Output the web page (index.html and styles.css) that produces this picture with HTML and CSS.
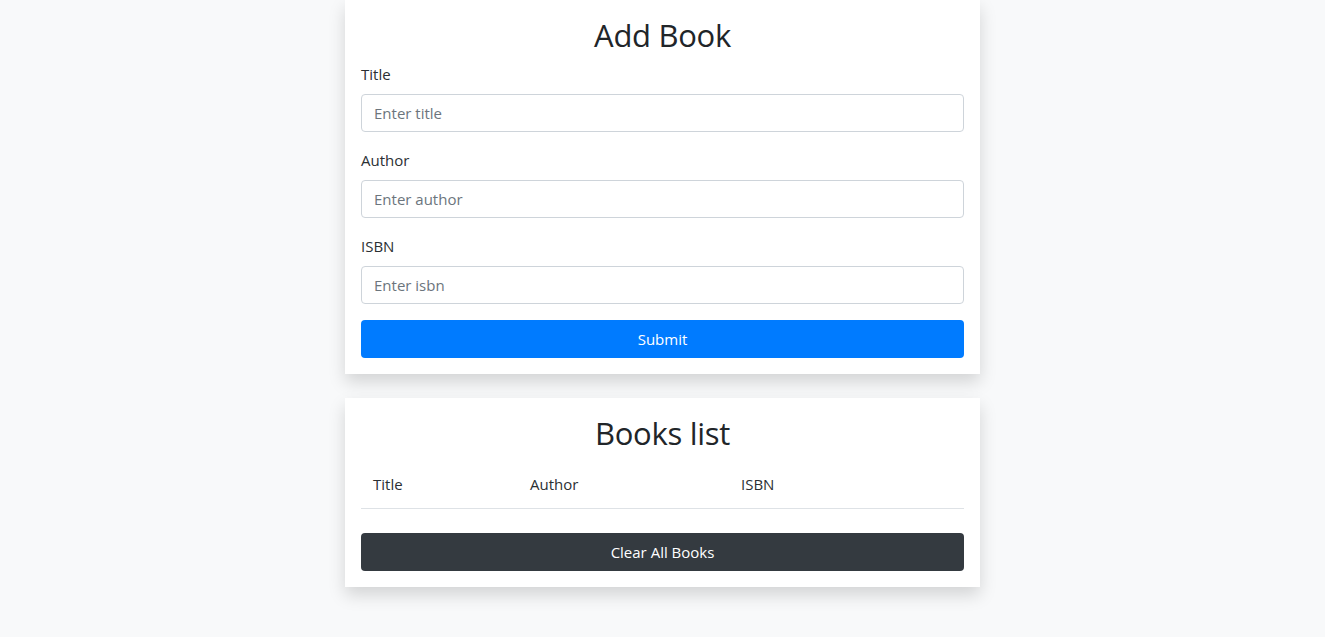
FILE: index.html
```html
<!DOCTYPE html>
<html lang="en">
<head>
<meta charset="utf-8">
<title>Book List</title>
<link rel="stylesheet" href="styles.css">
</head>
<body>
<main class="container">
  <section class="card">
    <h2 class="card-title">Add Book</h2>
    <form class="book-form">
      <div class="form-group">
        <label for="title">Title</label>
        <input id="title" type="text" placeholder="Enter title">
      </div>
      <div class="form-group">
        <label for="author">Author</label>
        <input id="author" type="text" placeholder="Enter author">
      </div>
      <div class="form-group">
        <label for="isbn">ISBN</label>
        <input id="isbn" type="text" placeholder="Enter isbn">
      </div>
      <button type="button" class="btn btn-primary">Submit</button>
    </form>
  </section>
  <section class="card">
    <h2 class="card-title">Books list</h2>
    <table class="table">
      <thead>
        <tr>
          <th class="col-title">Title</th>
          <th class="col-author">Author</th>
          <th class="col-isbn">ISBN</th>
        </tr>
      </thead>
      <tbody></tbody>
    </table>
    <button type="button" class="btn btn-dark">Clear All Books</button>
  </section>
</main>
</body>
</html>
```
FILE: styles.css
```css
* { box-sizing: border-box; }
html, body { margin: 0; padding: 0; }
body {
  background: #f8f9fa;
  color: #212529;
  font-family: "Open Sans", "Noto Sans", "Liberation Sans", sans-serif;
  font-size: 16px;
  line-height: 24px;
  min-height: 637px;
}
.container {
  width: 635px;
  margin: 0 auto;
  padding-bottom: 50px;
  display: flex;
  flex-direction: column;
  gap: 24px;
}
.card {
  background: #fff;
  padding: 16px;
  box-shadow: 0 8px 16px rgba(0,0,0,0.15);
  display: flex;
  flex-direction: column;
}
.card-title {
  margin: 0 0 8px;
  padding-top: 1px;
  font-size: 31px;
  font-weight: 400;
  line-height: 37px;
  text-align: center;
  letter-spacing: -0.3px;
  color: #212529;
}
.book-form { display: flex; flex-direction: column; }
.form-group { display: flex; flex-direction: column; margin-bottom: 16px; }
label { margin-bottom: 8px; font-size: 15px; line-height: 24px; color: #2b2f33; }
input {
  height: 38px;
  padding: 6px 12px;
  border: 1px solid #ced4da;
  border-radius: 4px;
  font: inherit;
  font-size: 15px;
  color: #495057;
  background: #fff;
}
input::placeholder { color: #6c757d; }
.btn {
  height: 38px;
  border: 1px solid transparent;
  border-radius: 4px;
  font: inherit;
  font-size: 15px;
  font-weight: 500;
  color: #fff;
  cursor: pointer;
}
.btn-primary { background: #007bff; }
.btn-dark { background: #343a40; margin-top: 8px; }
.table {
  width: 100%;
  border-collapse: collapse;
  margin-bottom: 16px;
}
.table th {
  text-align: left;
  font-weight: 400;
  font-size: 15px;
  padding: 12px;
  line-height: 24px;
  color: #2b2f33;
  border-bottom: 1px solid #dee2e6;
}
.col-title { width: 157px; }
.col-author { width: 211px; }
```
